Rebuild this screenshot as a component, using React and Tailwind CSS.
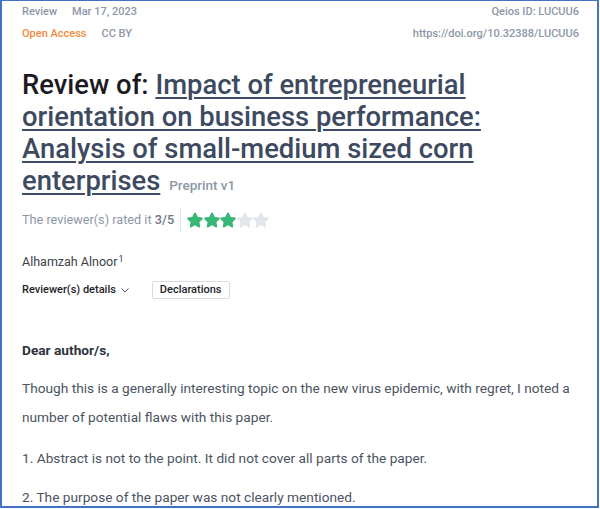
import React from "react";

function Star({ filled }) {
  return (
    <svg width="16" height="16" viewBox="2 1.6 20 20" className="shrink-0">
      <path
        d="M12 2.2c.5 0 .9.3 1.1.7l2.4 4.9 5.4.8c.9.1 1.3 1.2.6 1.9l-3.9 3.8.9 5.4c.2.9-.8 1.6-1.6 1.2L12 18.3l-4.9 2.6c-.8.4-1.8-.3-1.6-1.2l.9-5.4-3.9-3.8c-.7-.7-.3-1.8.6-1.9l5.4-.8 2.4-4.9c.2-.4.6-.7 1.1-.7z"
        fill={filled ? "#38b775" : "#e3e7ed"}
      />
    </svg>
  );
}

export default function App() {
  return (
    <div className="w-[599px] h-[508px] bg-white border-t border-l-2 border-r-2 border-b-2 border-[#4472c4] overflow-hidden font-['Roboto',sans-serif]">
      <div className="pl-[20px] pr-[18px] pt-[3px]">
        <div className="flex justify-between text-[11px] leading-[16px] font-medium">
          <div className="flex gap-[15px] text-[#8d97a7]">
            <span>Review</span>
            <span>Mar 17, 2023</span>
          </div>
          <span className="text-[#8d97a7]">Qeios ID: LUCUU6</span>
        </div>
        <div className="flex justify-between text-[11px] leading-[16px] font-medium mt-[6px]">
          <div className="flex gap-[15px]">
            <span className="text-[#f5893b]">Open Access</span>
            <span className="text-[#8d97a7]">CC BY</span>
          </div>
          <span className="text-[#8d97a7]">https://doi.org/10.32388/LUCUU6</span>
        </div>

        <h1 className="mt-[27px] text-[27.4px] leading-[32px] font-medium text-[#1b1b1f] pr-[70px]">
          Review of:{" "}
          <a className="text-[#3d4a5f] underline decoration-[1.5px] underline-offset-[3px]">
            Impact of entrepreneurial orientation on business performance: Analysis of small-medium sized corn enterprises
          </a>{" "}
          <span className="text-[13.5px] font-medium text-[#8d97a7] align-baseline ml-[2px]">Preprint v1</span>
        </h1>

        <div className="flex items-center mt-[7px] h-[24px]">
          <span className="text-[12.7px] text-[#8d97a7]">
            The reviewer(s) rated it <span className="font-medium text-[#6b7689]">3/5</span>
          </span>
          <div className="w-px h-[24px] bg-[#dfe3ea] mx-[6px]" />
          <div className="flex gap-[0.5px]">
            <Star filled />
            <Star filled />
            <Star filled />
            <Star />
            <Star />
          </div>
        </div>

        <div className="mt-[22px] text-[12.5px] leading-[16px] text-[#3b3f46]">
          Alhamzah Alnoor<sup className="text-[9px] ml-[1px]">1</sup>
        </div>

        <div className="flex items-center mt-[11px] text-[11px] font-medium text-[#1f2329]">
          <span>Reviewer(s) details</span>
          <svg width="10" height="10" viewBox="0 0 10 10" className="ml-[4px]">
            <path d="M1.5 3.5 5 7l3.5-3.5" fill="none" stroke="#4b5261" strokeWidth="1" />
          </svg>
          <span className="ml-[22px] border border-[#d7dce3] rounded-[2px] px-[7px] h-[18px] leading-[16px]">
            Declarations
          </span>
        </div>

        <div className="mt-[37px] text-[13.7px] leading-[29px] text-[#4b5361]">
          <p className="font-bold text-[#2f333a]">Dear author/s,</p>
          <p className="mt-[9px]">
            Though this is a generally interesting topic on the new virus epidemic, with regret, I noted a number of potential flaws with this paper.
          </p>
          <p className="mt-[12px]">1. Abstract is not to the point. It did not cover all parts of the paper.</p>
          <p className="mt-[10px]">2. The purpose of the paper was not clearly mentioned.</p>
        </div>
      </div>
    </div>
  );
}
